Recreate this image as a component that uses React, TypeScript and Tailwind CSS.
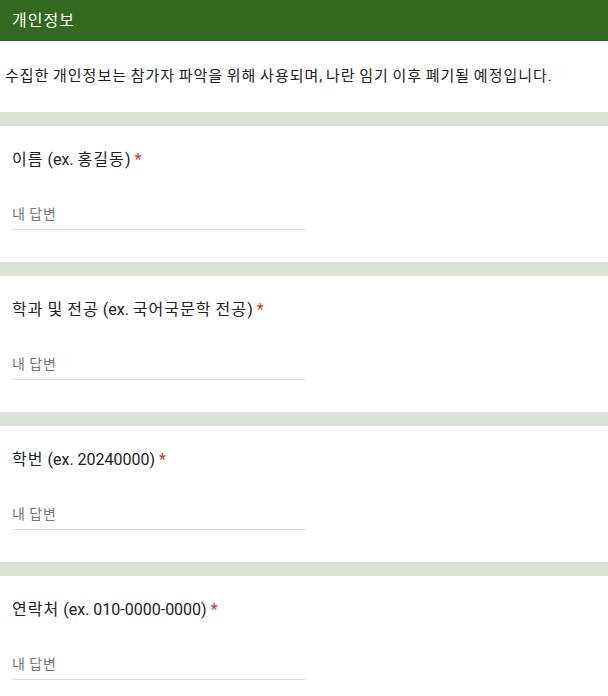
import React from "react";

const questions = [
  "이름 (ex. 홍길동)",
  "학과 및 전공 (ex. 국어국문학 전공)",
  "학번 (ex. 20240000)",
  "연락처 (ex. 010-0000-0000)",
];

function K({ text }: { text: string }) {
  const parts = text.split(/([\uAC00-\uD7A3]+)/).filter((p) => p.length > 0);
  return (
    <span className="whitespace-pre">
      {parts.map((p, i) =>
        /[\uAC00-\uD7A3]/.test(p) ? (
          <span key={i} className="tracking-[0.065em]">
            {p}
          </span>
        ) : (
          <span key={i}>{p}</span>
        )
      )}
    </span>
  );
}

export default function App() {
  return (
    <div className="w-[608px] min-h-[696px] bg-white text-[#202124] font-['Roboto','Noto_Sans_CJK_KR',sans-serif]">
      <header className="h-[41px] bg-[#33691e] px-3 flex items-center text-white text-[16px]">
        <K text="개인정보" />
      </header>
      <div className="h-[71px] px-[5px] flex items-center text-[15px]">
        <K text="수집한 개인정보는 참가자 파악을 위해 사용되며, 나란 임기 이후 폐기될 예정입니다." />
      </div>
      {questions.map((q) => (
        <section key={q}>
          <div className="h-[14px] bg-[#d8e2d5]" />
          <div className="px-3 pt-[22px] pb-[32px]">
            <div className="text-[16px] leading-6">
              <K text={q + " "} />
              <span className="text-[#d93025]">*</span>
            </div>
            <div className="mt-8 w-[294px] border-b border-[#e0e0e0] pb-[5px]">
              <div className="text-[14px] leading-5 text-[#70757a]">
                <K text="내 답변" />
              </div>
            </div>
          </div>
        </section>
      ))}
    </div>
  );
}
